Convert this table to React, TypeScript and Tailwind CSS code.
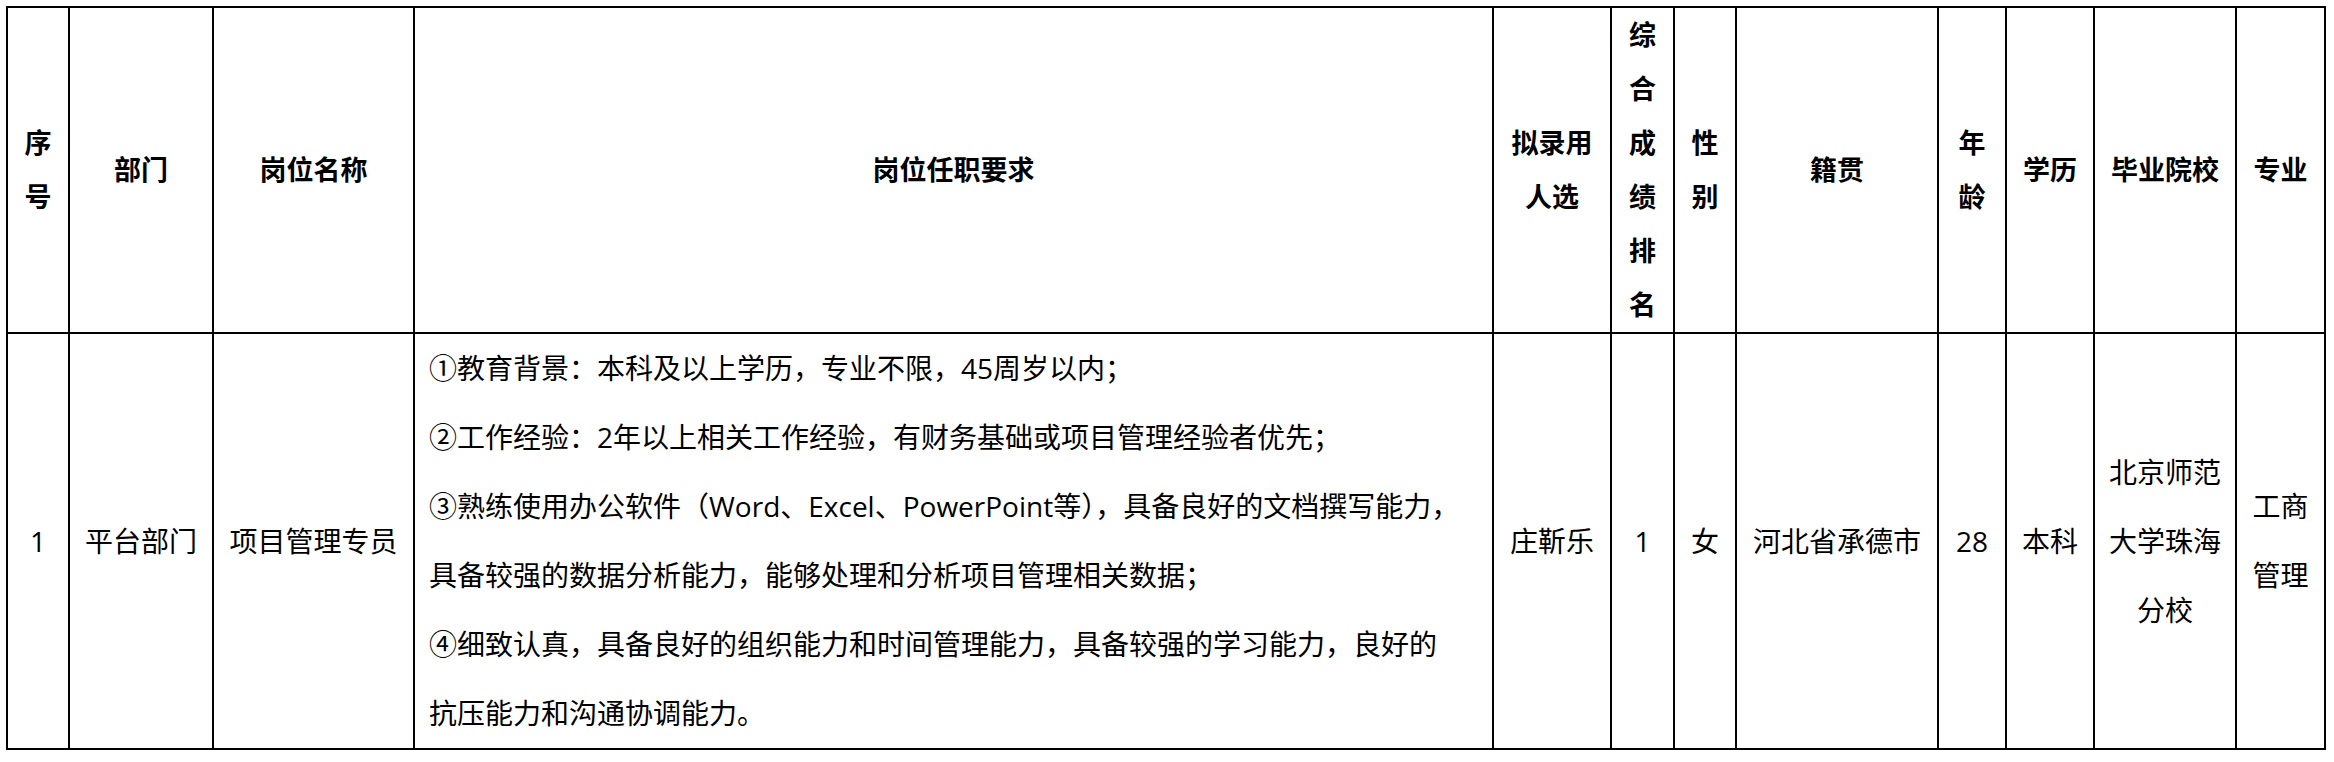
const cols = [62, 144, 201, 1079, 118, 63, 62, 202, 68, 88, 142, 89];

const Lines = ({ items }: { items: string[] }) => (
  <>
    {items.map((t, i) => (
      <div key={i} className="whitespace-nowrap">
        {t}
      </div>
    ))}
  </>
);

const headers: string[][] = [
  ["序", "号"],
  ["部门"],
  ["岗位名称"],
  ["岗位任职要求"],
  ["拟录用", "人选"],
  ["综", "合", "成", "绩", "排", "名"],
  ["性", "别"],
  ["籍贯"],
  ["年", "龄"],
  ["学历"],
  ["毕业院校"],
  ["专业"],
];

const requirements = [
  "①教育背景：本科及以上学历，专业不限，45周岁以内；",
  "②工作经验：2年以上相关工作经验，有财务基础或项目管理经验者优先；",
  "③熟练使用办公软件（Word、Excel、PowerPoint等），具备良好的文档撰写能力，",
  "具备较强的数据分析能力，能够处理和分析项目管理相关数据；",
  "④细致认真，具备良好的组织能力和时间管理能力，具备较强的学习能力，良好的",
  "抗压能力和沟通协调能力。",
];

const row: string[][] = [
  ["1"],
  ["平台部门"],
  ["项目管理专员"],
  [],
  ["庄靳乐"],
  ["1"],
  ["女"],
  ["河北省承德市"],
  ["28"],
  ["本科"],
  ["北京师范", "大学珠海", "分校"],
  ["工商", "管理"],
];

const App = () => {
  return (
    <div className="min-h-screen bg-white font-['Open_Sans','Noto_Sans_CJK_SC',sans-serif] text-black">
      <table className="ml-[6px] mt-[6px] w-[2318px] table-fixed border-collapse">
        <colgroup>
          {cols.map((w, i) => (
            <col key={i} style={{ width: w }} />
          ))}
        </colgroup>
        <thead>
          <tr>
            {headers.map((h, i) => (
              <th
                key={i}
                className="border-2 border-black p-0 text-center align-middle text-[27px] font-bold leading-[54px]"
              >
                <Lines items={h} />
              </th>
            ))}
          </tr>
        </thead>
        <tbody>
          <tr>
            {row.map((c, i) =>
              i === 3 ? (
                <td
                  key={i}
                  className="border-2 border-black py-0 pl-[14px] pr-2 text-left align-middle text-[28px] leading-[69px]"
                >
                  <Lines items={requirements} />
                </td>
              ) : (
                <td
                  key={i}
                  className="border-2 border-black p-0 text-center align-middle text-[28px] leading-[69px]"
                >
                  <Lines items={c} />
                </td>
              )
            )}
          </tr>
        </tbody>
      </table>
    </div>
  );
};

export default App;
